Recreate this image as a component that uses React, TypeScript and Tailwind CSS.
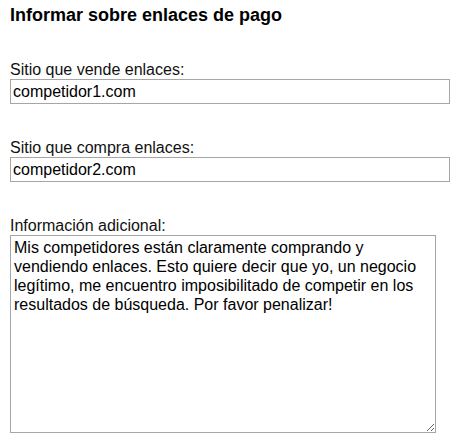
import { useState } from "react";

export default function App() {
  const [seller, setSeller] = useState("competidor1.com");
  const [buyer, setBuyer] = useState("competidor2.com");
  const [notes, setNotes] = useState(
    "Mis competidores están claramente comprando y vendiendo enlaces. Esto quiere decir que yo, un negocio legítimo, me encuentro imposibilitado de competir en los resultados de búsqueda. Por favor penalizar!"
  );

  return (
    <main className="min-h-screen bg-white px-[10px] pt-[5px] font-['Liberation_Sans',Arial,sans-serif] text-[16px] leading-[18px] text-[#111]">
      <h1 className="text-[18px] font-bold leading-[21px] text-black">Informar sobre enlaces de pago</h1>
      <form className="mt-[35px] flex flex-col" onSubmit={(event) => event.preventDefault()}>
        <label className="flex flex-col">
          <span>Sitio que vende enlaces:</span>
          <input
            className="h-[25px] w-[440px] border border-[#a6a6a6] px-[2px] text-[16px] text-black outline-none"
            onChange={(event) => setSeller(event.target.value)}
            value={seller}
          />
        </label>
        <label className="mt-[35px] flex flex-col">
          <span>Sitio que compra enlaces:</span>
          <input
            className="h-[25px] w-[440px] border border-[#a6a6a6] px-[2px] text-[16px] text-black outline-none"
            onChange={(event) => setBuyer(event.target.value)}
            value={buyer}
          />
        </label>
        <label className="mt-[35px] flex flex-col">
          <span>Información adicional:</span>
          <textarea
            className="h-[198px] w-[426px] border border-[#a6a6a6] px-[3px] py-[2px] text-[16px] leading-[19px] text-black outline-none"
            onChange={(event) => setNotes(event.target.value)}
            value={notes}
          />
        </label>
      </form>
    </main>
  );
}
